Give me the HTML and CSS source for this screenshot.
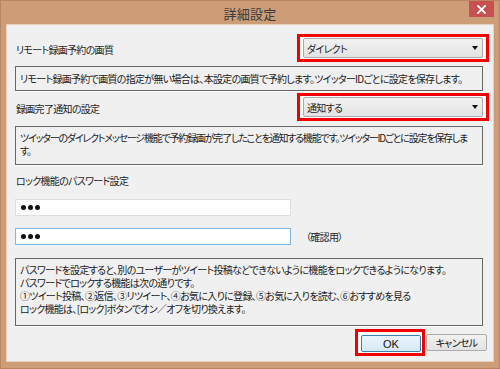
FILE: index.html
```html
<!DOCTYPE html>
<html lang="ja">
<head>
<meta charset="utf-8">
<title>詳細設定</title>
<link rel="stylesheet" href="styles.css">
</head>
<body>
<div class="window">
  <div class="titlebar">
    <span class="title">詳細設定</span>
    <span class="close"><svg width="9" height="9" viewBox="0 0 9 9"><path d="M1 1L8 8M8 1L1 8" stroke="#fff" stroke-width="1.8" stroke-linecap="square"/></svg></span>
  </div>
  <div class="content">
    <div class="row row1">
      <span class="label">リモート録画予約の画質</span>
      <div class="hl hl-select">
        <div class="select"><span>ダイレクト</span><span class="arrow"></span></div>
      </div>
    </div>
    <div class="desc desc1">リモート録画予約で画質の指定が無い場合は、本設定の画質で予約します。ツイッターIDごとに設定を保存します。</div>
    <div class="row row2">
      <span class="label">録画完了通知の設定</span>
      <div class="hl hl-select">
        <div class="select"><span>通知する</span><span class="arrow"></span></div>
      </div>
    </div>
    <div class="desc desc2">ツイッターのダイレクトメッセージ機能で予約録画が完了したことを通知する機能です。ツイッターIDごとに設定を保存しま<br>す。</div>
    <div class="label label3">ロック機能のパスワード設定</div>
    <div class="input input1"><span class="dot"></span><span class="dot"></span><span class="dot"></span></div>
    <div class="pw2">
      <div class="input input2"><span class="dot"></span><span class="dot"></span><span class="dot"></span></div>
      <span class="confirm">（確認用）</span>
    </div>
    <div class="desc desc3">パスワードを設定すると、別のユーザーがツイート投稿などできないように機能をロックできるようになります。<br>パスワードでロックする機能は次の通りです。<br>①ツイート投稿、②返信、③リツイート、④お気に入りに登録、⑤お気に入りを読む、⑥おすすめを見る<br>ロック機能は、[ロック]ボタンでオン／オフを切り換えます。</div>
    <div class="buttons">
      <div class="hl hl-ok"><div class="btn btn-ok">OK</div></div>
      <div class="btn btn-cancel">キャンセル</div>
    </div>
  </div>
</div>
</body>
</html>
```
FILE: styles.css
```css
* { box-sizing: border-box; }
html, body { margin: 0; padding: 0; }
body {
  width: 500px;
  height: 369px;
  overflow: hidden;
  font-family: "Noto Sans CJK JP", "Noto Sans", sans-serif;
  font-feature-settings: "palt";
  font-size: 10px;
  letter-spacing: -0.7px;
  color: #1e1e1e;
}
.window {
  width: 500px;
  height: 369px;
  background: #cd9d77;
  border: 1px solid #b8865f;
  display: flex;
  flex-direction: column;
  position: relative;
}
.titlebar {
  height: 23px;
  display: flex;
  align-items: center;
  justify-content: center;
  flex: none;
}
.title {
  font-size: 13px;
  color: #3a3a3a;
  letter-spacing: 0.3px;
  padding-top: 2px;
}
.close {
  position: absolute;
  top: 0;
  right: 5px;
  width: 25px;
  height: 16px;
  background: #c75050;
  display: flex;
  align-items: center;
  justify-content: center;
}
.content {
  flex: 1;
  margin: 0 5px 6px 5px;
  background: #f0f0f0;
  border: 1px solid #e6cfbb;
  padding: 9px 4px 0 8px;
  display: flex;
  flex-direction: column;
}
.row {
  height: 28px;
  display: flex;
  align-items: center;
  justify-content: space-between;
}
.label { padding-left: 1px; padding-top: 2px; }
.hl {
  border: 3px solid #f00000;
  background: #fbfbfb;
}
.hl-select {
  width: 192px;
  height: 28px;
  padding: 1px 3px;
}
.select {
  height: 20px;
  border: 1px solid #acacac;
  border-radius: 2px;
  background: linear-gradient(#f2f2f2, #e3e3e3);
  display: flex;
  align-items: center;
  justify-content: space-between;
  padding: 0 4px 0 3px;
}
.arrow {
  width: 0;
  height: 0;
  border-left: 3.5px solid transparent;
  border-right: 3.5px solid transparent;
  border-top: 4px solid #111;
}
.desc {
  border: 1px solid #666;
  box-shadow: 0 1px 0 #fff;
  margin-right: 6px;
  padding: 0 4px;
  white-space: nowrap;
  color: #1a1a1a;
}
.desc1 {
  margin-top: 4px;
  height: 25px;
  display: flex;
  align-items: center;
}
.row2 { margin-top: 2px; }
.desc2 {
  margin-top: 5px;
  height: 39px;
  padding-top: 4px;
  line-height: 13px;
  letter-spacing: -1.2px;
}
.label3 {
  margin-top: 9px;
  height: 14px;
  line-height: 14px;
  padding-top: 0;
}
.input {
  width: 276px;
  height: 17px;
  background: #fff;
  display: flex;
  align-items: center;
  gap: 2px;
  padding-left: 5px;
}
.dot {
  width: 5px;
  height: 5px;
  border-radius: 50%;
  background: #111;
}
.input1 {
  margin-top: 11px;
  border: 1px solid #dedede;
}
.pw2 {
  margin-top: 12px;
  display: flex;
  align-items: center;
}
.input2 { border: 1px solid #86b6e4; }
.confirm { margin-left: 15px; }
.desc3 {
  margin-top: 13px;
  height: 68px;
  padding-top: 4px;
  line-height: 13px;
}
.buttons {
  margin-top: 3px;
  display: flex;
  justify-content: flex-end;
  align-items: center;
  padding-right: 2px;
}
.hl-ok {
  width: 70px;
  height: 27px;
  padding: 3px 2px 0 3px;
}
.btn {
  height: 17px;
  display: flex;
  align-items: center;
  justify-content: center;
  border-radius: 2px;
  color: #111;
}
.btn-ok {
  width: 60px;
  border: 1px solid #3c7fb1;
  background: linear-gradient(#eaf4fc, #d6e9f8);
  font-family: "Liberation Sans", sans-serif;
  font-size: 11px;
  letter-spacing: 0;
}
.btn-cancel {
  width: 61px;
  margin-left: 1px;
  border: 1px solid #acacac;
  background: linear-gradient(#f2f2f2, #e2e2e2);
}
```
